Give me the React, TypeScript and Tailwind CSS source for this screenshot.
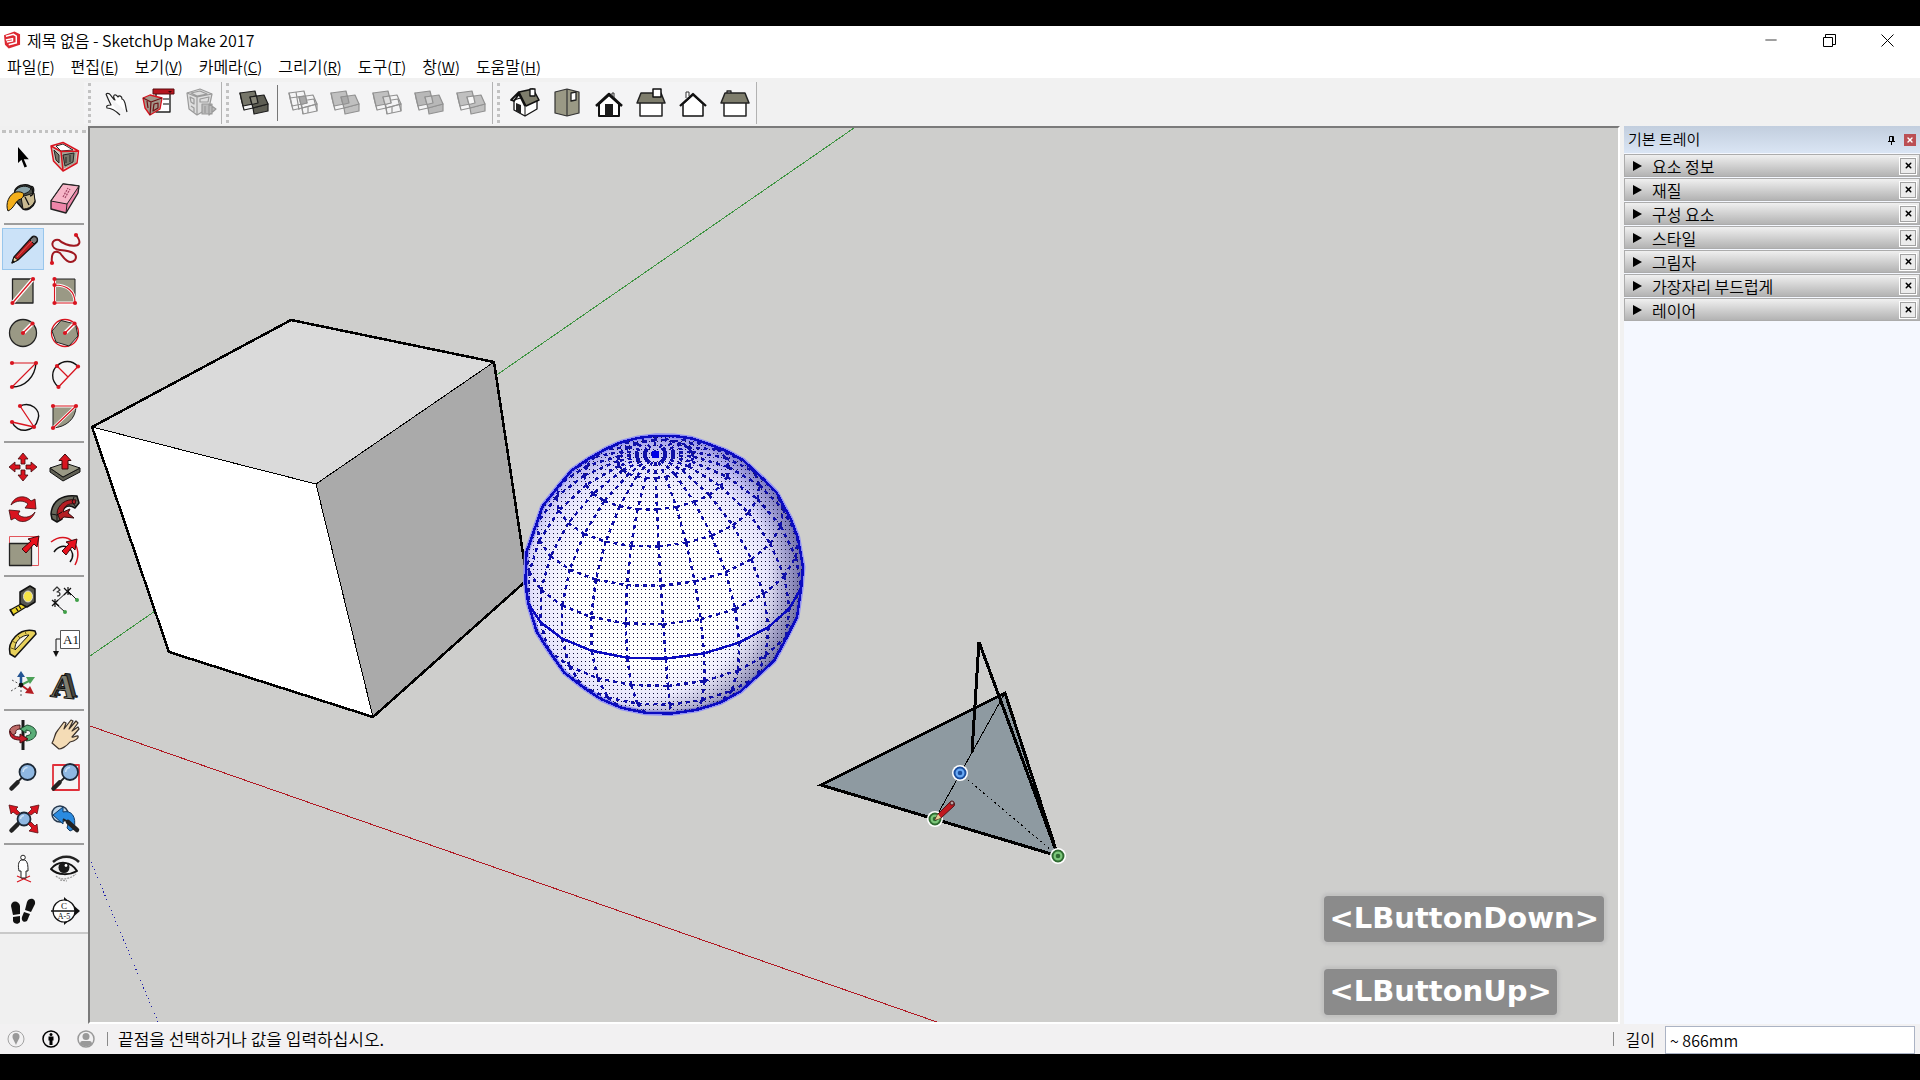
import type { ReactNode } from "react";
import { X, Minus } from "lucide-react";

const RED = "#d8141f";
const DARK = "#262626";
const STONE = "#9a9985";

type Tool = { label: string; icon: ReactNode };

function Icon({ children }: { children: ReactNode }) {
  return (
    <svg viewBox="0 0 34 34" className="h-[34px] w-[34px] overflow-visible" fill="none" strokeLinejoin="round" aria-hidden="true">
      {children}
    </svg>
  );
}

function Dots({ points }: { points: number[][] }) {
  return (
    <>
      {points.map(([x, y]) => (
        <circle key={`${x}-${y}`} cx={x} cy={y} r="2.1" fill={RED} />
      ))}
    </>
  );
}

function Lens({ x, y, r }: { x: number; y: number; r: number }) {
  return (
    <>
      <path d={`M${x - r * 0.7} ${y + r * 0.7}L5 29`} stroke="#222" strokeWidth="2" />
      <path d="M11.500 22.500L5.500 28.500" stroke="#222" strokeWidth="4.500" strokeLinecap="round" />
      <circle cx={x} cy={y} r={r} fill="#8fb8e2" stroke="#1c2836" strokeWidth="1.800" />
      <path d={`M${x - r * 0.55} ${y}A${r * 0.6} ${r * 0.6} 0 0 1 ${x} ${y - r * 0.55}`} stroke="#cfe2f5" strokeWidth="1.500" />
    </>
  );
}

/* ---- left tool palette ---- */

const paletteGroups: Tool[][] = [
  [
    {
      label: "선택",
      icon: <path d="M12 7V23L15.500 19.800L18.500 27.500L21 26.500L17.800 19.200H22.800Z" fill="#000" />,
    },
    {
      label: "구성 요소 만들기",
      icon: (
        <>
          <path d="M3 6L15 2.500L30.500 11L29 23L15 31L5.500 21Z" fill="#f4e6e4" />
          <path d="M13 12L29 11L28 23L15 29Z" fill="#a7a697" />
          <path d="M3 6L13 12L15 30.500L5.500 21Z" fill="#c9c6bb" />
          <path d="M8 6L15 4L25 10L13 11Z" fill="#fff" stroke={DARK} />
          <path d="M15 15L26 13L25 22L17 26ZM18 17V23M22 15V22M6 10L11 15V23L8 20Z" fill="#777669" stroke={DARK} />
          <path d="M3 6L15 2.500L30.500 11L29 23L15 31L5.500 21ZM3 6L13 11.500L30.500 11M13 11.500L15 31" stroke={RED} strokeWidth="1.500" />
        </>
      ),
    },
    {
      label: "페인트통",
      icon: (
        <>
          <path d="M9 8C12 2 23 1 26 6L29 20C27 26 21 29 17 27L8 17Z" fill="#4d5149" stroke="#111" strokeWidth="1.500" />
          <path d="M9 9C13 3 22 3 25 7C23 11 15 14 9 12Z" fill="#8aa3a8" stroke="#111" />
          <path d="M15 15L28 11L29 19C26 25 22 27 17 27Z" fill="#c9ba91" stroke="#111" />
          <path d="M19 15L23 23M24 5C29 2 29 13 24 14" stroke="#111" strokeWidth="1.300" />
          <path d="M2 29C-1 22 3 12 10 10C18 9 20 13 15 17C9 18 9 26 2 29Z" fill="#f4b01c" stroke="#111" />
        </>
      ),
    },
    {
      label: "지우개",
      icon: (
        <>
          <path d="M3 19L15 2L31 4L30 11L18 31L3 27Z" fill="#ee86a9" stroke="#222" strokeWidth="1.400" />
          <path d="M3 19L15 2L31 4L19 22Z" fill="#f7b5c8" stroke="#222" />
          <path d="M19 22L18 31" stroke="#222" />
          <path d="M15 15L20 6M17 16L22 7" stroke="#a04665" strokeWidth="1.200" strokeDasharray="2 1" />
        </>
      ),
    },
  ],
  [
    {
      label: "선",
      icon: (
        <>
          <path d="M6 31L8 25L26 5C28 3 33 5 31 10L12 28Z" fill="#b81d20" stroke="#161616" strokeWidth="1.300" />
          <path d="M6 31L8 25L12 28Z" fill="#e3cc9a" stroke="#161616" />
          <path d="M24 8L27 5C29 4 32 6 31 9L28 12Z" fill="#777" stroke="#161616" />
          <path d="M11 25L26 9" stroke="#e25a55" />
          <path d="M6 31L7 28L9 30Z" fill="#111" />
        </>
      ),
    },
    {
      label: "자유곡선",
      icon: (
        <>
          <path d="M28 3C40 18 17 15 11 8C3 6 1 17 12 18C26 19 30 23 27 28C21 34 15 25 12 21C5 17 3 23 4 31" stroke="#a01820" strokeWidth="2" />
          <Dots points={[[28, 3], [4, 31]]} />
        </>
      ),
    },
    {
      label: "직사각형",
      icon: (
        <>
          <path d="M6.500 5H27V29H6.500Z" fill={STONE} stroke="#222" strokeWidth="1.300" />
          <path d="M6.500 29L27 5" stroke="#fff" strokeWidth="4" />
          <path d="M6.500 29L27 5" stroke={RED} strokeWidth="1.300" />
          <Dots points={[[27, 5], [6.5, 29]]} />
        </>
      ),
    },
    {
      label: "회전된 직사각형",
      icon: (
        <>
          <path d="M6.500 5H27V29H6.500Z" fill={STONE} stroke="#222" />
          <path d="M6.500 5V29H27C27 17 19 11 6.500 11" stroke="#fff" strokeWidth="3" />
          <path d="M6.500 5V29H27C27 17 19 11 6.500 11" stroke={RED} strokeWidth="1.200" />
          <Dots points={[[6.5, 5], [6.5, 11], [6.5, 29], [27, 29]]} />
        </>
      ),
    },
    {
      label: "원",
      icon: (
        <>
          <circle cx="17" cy="17" r="13.500" fill={STONE} stroke="#222" strokeWidth="1.300" />
          <path d="M17 17L26.500 7.500" stroke="#fff" strokeWidth="4" />
          <path d="M17 17L26.500 7.500" stroke={RED} strokeWidth="1.300" />
          <Dots points={[[17, 17], [26.5, 7.5]]} />
        </>
      ),
    },
    {
      label: "다각형",
      icon: (
        <>
          <circle cx="17" cy="17" r="13.500" fill="#fff" stroke={RED} strokeWidth="1.300" />
          <path d="M13 4.500L27.500 8L30 20L21 30L8 26L4 15Z" fill={STONE} stroke="#222" />
          <path d="M17 17L26.500 7.500" stroke="#fff" strokeWidth="4" />
          <path d="M17 17L26.500 7.500" stroke={RED} strokeWidth="1.300" />
          <Dots points={[[17, 17], [26.5, 7.5]]} />
        </>
      ),
    },
    {
      label: "호",
      icon: (
        <>
          <path d="M30 5C29 19 19 29 6 29" stroke="#111" strokeWidth="1.400" />
          <path d="M6 5H30L6 29" stroke={RED} strokeWidth="1.100" />
          <Dots points={[[6, 5], [30, 5], [6, 29]]} />
        </>
      ),
    },
    {
      label: "2점 호",
      icon: (
        <>
          <path d="M10.500 29C2 22 4 12 9 8C15 2 24 2 30 8.500" stroke="#111" strokeWidth="1.400" />
          <path d="M10.500 29L30 8.500M9 8L20 19" stroke={RED} strokeWidth="1.300" />
          <Dots points={[[10.5, 29], [30, 8.5], [9, 8]]} />
        </>
      ),
    },
    {
      label: "3점 호",
      icon: (
        <>
          <path d="M14 6C25 1 35 10 32 19C29 33 11 34 6 22" stroke="#111" strokeWidth="1.400" />
          <path d="M14 6L28 27L6 22" stroke={RED} strokeWidth="1.300" />
          <Dots points={[[14, 6], [28, 27], [6, 22]]} />
        </>
      ),
    },
    {
      label: "파이",
      icon: (
        <>
          <path d="M5 6H28C28 19 18 27 5 28Z" fill={STONE} stroke="#222" />
          <path d="M5 28L28 6H5" stroke="#fff" strokeWidth="3" />
          <path d="M5 28L28 6H5" stroke={RED} strokeWidth="1.200" />
          <Dots points={[[5, 6], [28, 6], [5, 28]]} />
        </>
      ),
    },
  ],
  [
    {
      label: "이동",
      icon: (
        <g fill={RED} stroke="#3d0a0d" strokeWidth=".800">
          {[0, 90, 180, 270].map((a) => (
            <path key={a} transform={`rotate(${a} 17 17)`} d="M17 3L22 9H19V14H15V9H12Z" />
          ))}
        </g>
      ),
    },
    {
      label: "밀기/끌기",
      icon: (
        <>
          <path d="M2 18V22L15 31L32 22V18L15 27Z" fill="#5f5f53" stroke="#111" />
          <path d="M2 18L17 13L32 18L15 27Z" fill={STONE} stroke="#111" />
          <path d="M17 4L23 10.500H20V19H14V10.500H11Z" fill={RED} stroke="#3d0a0d" />
        </>
      ),
    },
    {
      label: "회전",
      icon: (
        <g fill={RED} stroke="#3d0a0d" strokeWidth=".800">
          <path d="M5 13C8 4 19 2 25 9L29 7L30 17L19 16L22 12C18 8 10 8 5 13Z" />
          <path d="M29 20C26 29 15 33 9 26L5 28L3 18L14 19L12 22C16 27 25 26 29 20Z" />
        </g>
      ),
    },
    {
      label: "따라가기",
      icon: (
        <>
          <path d="M3 22C4 9 14 2 29 4L31 11L27 16C19 11 13 16 14 27L9 30L4 27Z" fill="#66665a" stroke="#111" strokeWidth="1.500" />
          <path d="M9 22C9 13 18 6 28 8L27 12C20 11 16 14 15 20L22 17L20 21L26 26L16 25L12 28L10 23Z" fill="#b51d23" stroke="#350b0d" />
          <path d="M3 22L9 23V30M9 23L14 20M26 5L24 10L28 15" stroke="#111" />
        </>
      ),
    },
    {
      label: "배율",
      icon: (
        <>
          <path d="M3.500 2.500H32.500V31.500H3.500Z" stroke="#e2555c" />
          <path d="M3.500 9.500H25.500V31.500H3.500Z" fill={STONE} stroke="#222" strokeWidth="1.300" />
          <path d="M33 2L31 13L28 10L20 19L16 15L25 7L22 5Z" fill="#e8101c" stroke="#3d0a0d" />
        </>
      ),
    },
    {
      label: "오프셋",
      icon: (
        <>
          <path d="M3 8C19-5 37 12 27 31" stroke={RED} strokeWidth="1.500" />
          <path d="M6 18C15 5 31 17 22 28" stroke="#111" strokeWidth="1.500" />
          <path d="M29 5L27 16L24 13L18 21L14 17L21 10L18 8Z" fill="#e8101c" stroke="#3d0a0d" />
        </>
      ),
    },
  ],
  [
    {
      label: "줄자",
      icon: (
        <>
          <path d="M14 8L24 2L29 5V18L21 23L14 20Z" fill="#56564e" stroke="#111" strokeWidth="1.500" />
          <ellipse cx="22" cy="12.500" rx="4.500" ry="5.500" fill="#f6e445" stroke="#ddd" />
          <path d="M15 20L4 26L7 31L20 23Z" fill="#ead328" stroke="#111" strokeWidth="1.300" />
          <path d="M4 25L8 32M10 24L12 27M13 22L15 25" stroke="#111" strokeWidth="1.300" />
        </>
      ),
    },
    {
      label: "치수",
      icon: (
        <>
          <path d="M7 19L20 7L29 16M7 19L17 28" stroke="#111" />
          <path d="M4 16L11 22M4 22L10 16M7 15V23M16 4L23 11M16 11L23 4M20 3V11" stroke="#111" strokeWidth="1.200" />
          <path d="M5 7L9 3L12 6L9 8C13 8 13 12 9 12" stroke="#333" strokeWidth="1.200" />
          <circle cx="29" cy="16" r="2" fill="#3f9f47" />
          <circle cx="17" cy="28" r="2" fill="#3f9f47" />
        </>
      ),
    },
    {
      label: "각도기",
      icon: (
        <>
          <path d="M4 28C1 16 13 1 29 5L30 8L9 31Z" fill="#e8d15b" stroke="#111" strokeWidth="1.500" />
          <path d="M9 24C8 16 15 9 23 9Z" fill="#f7f3e6" stroke="#111" />
          <path d="M5 22L8 23M6 15L10 17M11 9L14 12M19 5L20 8" stroke="#705d15" />
        </>
      ),
    },
    {
      label: "텍스트",
      icon: (
        <>
          <path d="M12.500 4.500H31.500V22.500H12.500Z" fill="#fff" stroke="#555" />
          <text x="15" y="18" fontSize="13" fontFamily="Liberation Serif, serif" fill="#111">A1</text>
          <path d="M12 13H8V26" stroke="#111" />
          <path d="M5 25H11L8 31Z" fill="#111" />
        </>
      ),
    },
    {
      label: "축",
      icon: (
        <>
          <path d="M6 12L15 17M5 23L15 17M15 18V29" stroke="#555" strokeDasharray="2 2" />
          <path d="M15 17V7" stroke="#235493" strokeWidth="2.500" />
          <path d="M15 3L19 9H11Z" fill="#235493" />
          <path d="M15 17L23 13" stroke="#4ba057" strokeWidth="2" />
          <path d="M20 9L29 9L24 16Z" fill="#4ba057" />
          <path d="M15 17L22 22" stroke="#b51d23" strokeWidth="2" />
          <path d="M24 18L28 26L19 25Z" fill="#b51d23" />
          <circle cx="15" cy="17" r="2.300" fill="#111" />
        </>
      ),
    },
    {
      label: "3D 텍스트",
      icon: (
        <g fontFamily="Liberation Serif, serif" fontWeight="700" fontSize="34" stroke="#111" strokeWidth="1" transform="rotate(6 17 17)">
          <text x="6" y="28" fill="#474740">A</text>
          <text x="3" y="30" fill="#7d7d70">A</text>
        </g>
      ),
    },
  ],
  [
    {
      label: "궤도",
      icon: (
        <>
          <path d="M17 2V32" stroke="#1b1b1b" strokeWidth="3" />
          <path d="M14 7C4 7 1 13 6 18L10 15C9 13 11 11 14 11Z" fill="#bd6b68" stroke="#431416" />
          <path d="M20 23C33 22 34 9 21 7L14 11L20 15V12C27 13 26 17 20 18Z" fill="#5aae78" stroke="#17472a" />
          <path d="M4 13C3 19 7 22 14 22V25L22 21L14 16V19C9 19 6 17 4 13Z" fill="#c51d2a" stroke="#4b0d12" />
        </>
      ),
    },
    {
      label: "이동하기",
      icon: (
        <path
          d="M4 25C7 21 6 16 10 12L16 4L18 5L16 11L23 2L25 3L21 11L28 3L30 5L24 13L30 9L31 11L24 19C26 20 28 17 30 18C31 20 27 23 22 24C18 29 13 31 11 31Z"
          fill="#f4dcb6"
          stroke="#3a3029"
          strokeWidth="1.200"
        />
      ),
    },
    { label: "확대/축소", icon: <Lens x={21.5} y={12} r={8} /> },
    {
      label: "창 확대/축소",
      icon: (
        <>
          <path d="M5 5H31V30H5Z" stroke="#e0303a" strokeWidth="1.800" />
          <Lens x={22} y={12} r={8} />
        </>
      ),
    },
    {
      label: "범위 확대/축소",
      icon: (
        <>
          <Lens x={18} y={17} r={6.5} />
          <path d="M3 3L12 5L10 7L14 11L11 13L7 10L5 12ZM33 3L31 12L29 10L25 13L22 11L26 7L24 5ZM32 31L23 29L26 26L22 22L25 20L29 24L31 22Z" fill={RED} stroke="#5a1014" strokeWidth=".800" />
        </>
      ),
    },
    {
      label: "이전",
      icon: (
        <>
          <circle cx="12" cy="12" r="8" fill="#bdd4e8" stroke="#26384d" strokeWidth="1.500" />
          <path d="M5 13L15 5V10C23 8 29 14 26 27L22 29L19 26C21 20 19 18 15 18V22Z" fill="#2a8be0" stroke="#123b65" />
          <path d="M15 17L20 20" stroke="#222" strokeWidth="2" />
          <path d="M20 20L29 28" stroke="#222" strokeWidth="4.500" strokeLinecap="round" />
        </>
      ),
    },
  ],
  [
    {
      label: "카메라 배치",
      icon: (
        <>
          <path d="M11 24L25 30M24 24L11 30" stroke={RED} strokeWidth="1.200" />
          <path d="M15 8C12 10 12 14 13 19H15V26H20V19H22C22 14 22 10 19 8Z" fill="#fff" stroke="#222" />
          <circle cx="17" cy="5.500" r="2.300" fill="#fff" stroke="#222" />
        </>
      ),
    },
    {
      label: "둘러보기",
      icon: (
        <>
          <path d="M5 10C13 3 24 3 31 10" stroke="#222" strokeWidth="2.500" />
          <path d="M3 17C10 8 23 9 29 19C22 23 10 24 3 17Z" fill="#eee" stroke="#111" strokeWidth="2" />
          <circle cx="16" cy="15.500" r="5.500" fill="#181818" />
          <circle cx="18" cy="13.500" r="1.400" fill="#fff" />
          <path d="M8 24C13 29 22 27 28 22M12 28L19 29" stroke="#999" strokeWidth="1.200" strokeDasharray="2 1" />
        </>
      ),
    },
    {
      label: "걷기",
      icon: (
        <>
          <path d="M5 12C5 6 13 6 14 12L14 20L7 21Z" fill="#111" />
          <path d="M7 23L14 22V28C12 31 8 30 7 27Z" fill="#111" />
          <path d="M21 8C23 3 30 4 29 10L25 18L19 16Z" fill="#111" />
          <path d="M18 18L24 20L21 27C18 29 15 27 16 23Z" fill="#111" />
        </>
      ),
    },
    {
      label: "단면",
      icon: (
        <>
          <path d="M16 3L32 17L16 31Z" fill="#111" />
          <circle cx="16" cy="17" r="11" fill="#fff" stroke="#111" strokeWidth="1.200" />
          <path d="M3 17H31" stroke="#111" strokeWidth="1.500" />
          <g fontFamily="Liberation Serif, serif" fill="#111" textAnchor="middle">
            <text x="16" y="15" fontSize="9">C</text>
            <text x="16" y="25" fontSize="8">A-5</text>
          </g>
        </>
      ),
    },
  ],
];

/* ---- top toolbar ---- */

const BACK_TOP = "M3 7L18 5L21 17L6 20Z";
const BACK_SIDE = "M3 7L6 20L7 24L4 12Z";
const FRONT_TOP = "M13 11L27 9L31 18L16 22Z";
const FRONT_SIDE = "M16 22L31 18V25L17 28Z";
const OVERLAP = "M13 11L19.500 10L21 17L15 18.500Z";

function SolidIcon({ back, front, overlap, stroke }: { back: string; front: string; overlap: string; stroke: string }) {
  return (
    <Icon>
      <g stroke={stroke} strokeWidth="1.200">
        <path d={BACK_SIDE} fill={back} />
        <path d={BACK_TOP} fill={back} />
        <path d="M7 24L16 22" />
        <path d={FRONT_SIDE} fill={front} />
        <path d={FRONT_TOP} fill={front} />
        {back === "none" && <path d="M4 12L18 10M10 6L13 24" />}
        {front === "none" && <path d="M17 28L15 15L28 13L31 25M22 20V27" />}
        <path d={OVERLAP} fill={overlap} />
      </g>
    </Icon>
  );
}

const warehouseTools: Tool[] = [
  {
    label: "상호 작용",
    icon: (
      <path d="M7 8C11 5 13 13 16 14C13 9 16 7 19 11C20 9 23 10 23 13C27 14 26 20 28 26M7 8C9 13 11 17 12 19C8 19 7 20 8 22C13 22 16 24 21 29" fill="#fff" stroke="#222" strokeWidth="1.200" />
    ),
  },
  {
    label: "구성 요소 옵션",
    icon: (
      <>
        <path d="M15 6H29V26H15Z" fill="#fff" stroke="#222" strokeWidth="1.400" />
        <path d="M12 3H33V8H12Z" fill="#b5141d" stroke="#5b0c10" />
        <path d="M27 5H31L29 7Z" fill="#3b0709" />
        <path d="M22 13H28M22 18H28" stroke="#555" strokeWidth="1.300" />
        <path d="M2 12L9 9L21 12L19 23L9 29L4 22Z" fill="#a29689" stroke={RED} strokeWidth="1.300" />
        <path d="M2 12L10 16L21 12M10 16L9 29M13 18L17 17V22L12 25ZM6 15L7 22" stroke="#6d1115" strokeWidth="1.200" />
      </>
    ),
  },
  {
    label: "구성 요소 속성",
    icon: (
      <g stroke="#9a9a9a" strokeWidth="1.200">
        <path d="M4 7L17 3L29 8L26 22L14 29L6 23Z" fill="#dedede" />
        <path d="M4 7L14 11L29 8M14 11V29M8 7L17 5L24 8L14 10ZM17 13L26 11L25 16H17ZM7 11L11 13V18L8 16ZM8 20L11 22V26" />
        <path d="M19 18H29V28H19ZM22 20V27M26 18L33 23L26 29Z" fill="#bbb" />
      </g>
    ),
  },
];

const houseTools: Tool[] = [
  {
    label: "등각",
    icon: (
      <>
        <path d="M6 14V24L17 30L29 23V12L22 9Z" fill="#fff" stroke="#111" strokeWidth="1.300" />
        <path d="M8 17L13 19V28L8 25Z" fill="#222" />
        <path d="M17 19V30" stroke="#111" />
        <path d="M11 6L25 3L31 14L18 20Z" fill="#7e7d6c" stroke="#111" strokeWidth="1.500" />
        <path d="M11 6L3 14L6 15L11 8L17 20" stroke="#111" strokeWidth="1.800" />
        <path d="M22 3H27V10H22Z" fill="#fff" stroke="#111" strokeWidth="1.300" />
      </>
    ),
  },
  {
    label: "위쪽",
    icon: (
      <>
        <path d="M5 6L17 3L29 6V27L17 30L5 27Z" fill={STONE} stroke="#333" strokeWidth="1.200" />
        <path d="M17 3V30" stroke="#333" strokeWidth="1.200" />
        <path d="M21 7L26 6V14L21 15Z" fill="#fff" stroke="#222" strokeWidth="1.300" />
      </>
    ),
  },
  {
    label: "앞쪽",
    icon: (
      <>
        <path d="M7 18V30H27V18L17 9Z" fill="#fff" stroke="#111" strokeWidth="2" />
        <path d="M13 18H21V30H13Z" fill="#1b1b1b" />
        <path d="M4 20L17 8L30 20" stroke="#111" strokeWidth="2.500" />
        <path d="M20 10V7H22V12" stroke="#333" />
      </>
    ),
  },
  {
    label: "오른쪽",
    icon: (
      <>
        <path d="M6 16H28V30H6Z" fill="#fff" stroke="#222" strokeWidth="1.500" />
        <path d="M7 7H27L31 17H3Z" fill="#7e7d6c" stroke="#222" strokeWidth="1.500" />
        <path d="M19 3H27V11H19Z" fill="#fff" stroke="#111" strokeWidth="1.500" />
      </>
    ),
  },
  {
    label: "뒤쪽",
    icon: (
      <>
        <path d="M10 12V6H13V10" fill="#fff" stroke="#333" />
        <path d="M7 18V30H27V18L17 9Z" fill="#fff" stroke="#111" strokeWidth="1.500" />
        <path d="M4 20L17 8L30 20" stroke="#111" strokeWidth="2.300" />
      </>
    ),
  },
  {
    label: "왼쪽",
    icon: (
      <>
        <path d="M6 16H28V30H6Z" fill="#fff" stroke="#222" strokeWidth="1.500" />
        <path d="M7 7H27L31 17H3Z" fill="#7e7d6c" stroke="#222" strokeWidth="1.500" />
        <path d="M9 7V5H13V7" stroke="#222" strokeWidth="1.300" />
      </>
    ),
  },
];

const solidTools = [
  { label: "교차", back: "none", front: "none", overlap: "#a8a8a8" },
  { label: "결합", back: "#c0c0c0", front: "#c0c0c0", overlap: "#aaaaaa" },
  { label: "빼기", back: "#c0c0c0", front: "none", overlap: "#dddddd" },
  { label: "트림", back: "#b8b8b8", front: "#b8b8b8", overlap: "#d0d0d0" },
  { label: "분할", back: "#c0c0c0", front: "#c0c0c0", overlap: "#f6f6f6" },
];

function ToolButton({ label, children }: { label: string; children: ReactNode }) {
  return (
    <button type="button" aria-label={label} className="flex h-10 w-[42px] items-center justify-center">
      {children}
    </button>
  );
}

function ToolbarGroup({ children }: { children: ReactNode }) {
  return (
    <div className="flex items-center border-r border-[#b2b2b2] bg-[#f4f4f5] pl-1">
      <span className="mr-1 h-10 border-l-3 border-dotted border-[#c2c2c2]" />
      {children}
    </div>
  );
}

function Toolbar() {
  return (
    <div className="flex h-12 shrink-0 items-stretch bg-[#f1f1f1] pt-1 pb-0.5 pl-[84px]">
      <ToolbarGroup>
        {warehouseTools.map((t) => (
          <ToolButton key={t.label} label={t.label}>
            <Icon>{t.icon}</Icon>
          </ToolButton>
        ))}
      </ToolbarGroup>
      <ToolbarGroup>
        <ToolButton label="외부 셸">
          <SolidIcon back="#76766a" front="#5e5e54" overlap="#88877a" stroke="#1d1d1d" />
        </ToolButton>
        <span className="mr-1 ml-0.5 h-9 w-px bg-[#777]" />
        {solidTools.map((s) => (
          <ToolButton key={s.label} label={s.label}>
            <SolidIcon back={s.back} front={s.front} overlap={s.overlap} stroke="#919191" />
          </ToolButton>
        ))}
      </ToolbarGroup>
      <ToolbarGroup>
        {houseTools.map((t) => (
          <ToolButton key={t.label} label={t.label}>
            <Icon>{t.icon}</Icon>
          </ToolButton>
        ))}
      </ToolbarGroup>
    </div>
  );
}

function Palette() {
  return (
    <aside className="w-[88px] shrink-0 bg-[#f0f0f0] pt-1">
      <div className="border-b-2 border-[#c9c9c9] bg-[#f4f4f5] pr-0.5 pl-0.5">
        <div className="mb-[3px] border-t-3 border-dotted border-[#c2c2c2]" />
        {paletteGroups.map((group, i) => (
          <div key={i}>
            {i > 0 && <hr className="my-[3px] mr-0.5 ml-0.5 border-t-2 border-[#9d9d9d]" />}
            <div className="grid grid-cols-2">
              {group.map((t) => (
                <button
                  key={t.label}
                  type="button"
                  aria-label={t.label}
                  className={`flex h-[42px] items-center justify-center border ${
                    t.label === "선" ? "border-[#98c6ec] bg-[#cbe2f8]" : "border-transparent"
                  }`}
                >
                  <Icon>{t.icon}</Icon>
                </button>
              ))}
            </div>
          </div>
        ))}
      </div>
    </aside>
  );
}

/* ---- model view ---- */

const SPHERE = { x: 664, y: 575, r: 139.5, distance: 12, pitch: 34, roll: 4.2, spin: -1.7 };
const rad = (deg: number) => (deg * Math.PI) / 180;

function project(lat: number, lon: number) {
  const { x, y, r, distance, pitch, roll, spin } = SPHERE;
  const a = rad(lon + spin);
  const px = Math.cos(rad(lat)) * Math.sin(a);
  const pf = Math.cos(rad(lat)) * Math.cos(a);
  const pz = Math.sin(rad(lat));
  const up = pz * Math.cos(rad(pitch)) - pf * Math.sin(rad(pitch));
  const depth = pz * Math.sin(rad(pitch)) + pf * Math.cos(rad(pitch));
  const k = (r * Math.sqrt(distance * distance - 1)) / (distance - depth);
  const c = Math.cos(rad(roll));
  const s = Math.sin(rad(roll));
  return {
    x: x + k * (px * c - up * s),
    y: y - k * (px * s + up * c),
    visible: depth * distance > 0.4,
  };
}

const lats = [75, 60, 45, 30, 15, 0, -15, -30, -45, -60];
const lons = Array.from({ length: 24 }, (_, i) => i * 15);

function segment(a: ReturnType<typeof project>, b: ReturnType<typeof project>) {
  return a.visible && b.visible ? `M${a.x.toFixed(1)} ${a.y.toFixed(1)}L${b.x.toFixed(1)} ${b.y.toFixed(1)}` : "";
}

const ringPath = (lat: number) => lons.map((lon) => segment(project(lat, lon), project(lat, lon + 15))).join("");
const meridians = lons
  .flatMap((lon) => [90, ...lats].slice(0, -1).map((lat) => segment(project(lat, lon), project(lat - 15, lon))))
  .join("");

// silhouette: the outermost mesh vertex in each direction
const vertices = lats.flatMap((lat) => lons.map((lon) => project(lat, lon)));
const outline = Array.from({ length: 120 }, (_, i) => {
  const c = Math.cos(rad(i * 3));
  const s = Math.sin(rad(i * 3));
  const v = vertices.reduce((best, p) => (p.x * c + p.y * s > best.x * c + best.y * s ? p : best));
  return `${v.x.toFixed(1)},${v.y.toFixed(1)}`;
}).join(" ");

function Sphere() {
  return (
    <g>
      <polygon points={outline} fill="url(#ball)" stroke="#8f8ff5" strokeWidth="5" />
      <polygon points={outline} fill="url(#shade)" />
      <polygon points={outline} fill="url(#halftone)" />
      <g fill="none" stroke="#1010a8" strokeWidth="2.500" shapeRendering="crispEdges">
        <path d={lats.filter((l) => l !== 0).map(ringPath).join("")} strokeDasharray="4 4" />
        <path d={meridians} strokeDasharray="4 4" />
        <path d={ringPath(0)} stroke="#0c0cc0" />
        <polygon points={outline} stroke="#0c0cc0" />
      </g>
      <rect x="652" y="451" width="7" height="7" fill="#0000e6" />
    </g>
  );
}

function SnapPoint({ x, y, ring, fill }: { x: number; y: number; ring: string; fill: string }) {
  return (
    <g>
      <circle cx={x} cy={y} r="8" fill="#fff" />
      <circle cx={x} cy={y} r="5.500" fill={fill} stroke={ring} strokeWidth="2" />
      <circle cx={x} cy={y} r="2.300" fill={ring} />
    </g>
  );
}

function Scene() {
  return (
    <svg viewBox="90 128 1528 894" preserveAspectRatio="xMinYMin slice" className="h-full w-full" role="img" aria-label="모델 보기">
      <defs>
        <radialGradient id="ball" cx="0.46" cy="0.54" r="0.57">
          <stop offset="0.5" stopColor="#ffffff" />
          <stop offset="0.76" stopColor="#e4e2fb" />
          <stop offset="1" stopColor="#8a87e4" />
        </radialGradient>
        <radialGradient id="shade" cx="0.38" cy="0.46" r="0.66">
          <stop offset="0.74" stopColor="#404058" stopOpacity="0" />
          <stop offset="1" stopColor="#404058" stopOpacity="0.6" />
        </radialGradient>
        <pattern id="halftone" width="4" height="4" patternUnits="userSpaceOnUse">
          <rect x="1" y="1" width="1" height="1" fill="#10103c" />
        </pattern>
      </defs>

      <g fill="none" shapeRendering="crispEdges">
        <path d="M90 656L854 128" stroke="#3d9440" />
        <path d="M90 726L937 1022" stroke="#b01822" />
        <path d="M91 862L158 1022" stroke="#1c1ca8" strokeDasharray="1 3" />

        <path d="M92 427L291 320L494 362L316 484Z" fill="#dadada" />
        <path d="M92 427L316 484L373 717L169 652Z" fill="#fff" />
        <path d="M316 484L494 362L527 580L373 717Z" fill="#aaaaaa" />
        <path d="M92 427L316 484L494 362M316 484L373 717" stroke="#000" />
        <path d="M92 427L291 320L494 362L527 580L373 717L169 652Z" stroke="#000" strokeWidth="2.500" />
      </g>

      <Sphere />

      <g fill="none" shapeRendering="crispEdges" stroke="#000">
        <path d="M821 785L1005 693L1058 856Z" fill="#8e9aa1" strokeWidth="3" />
        <path d="M1005 693L935 819" />
        <path d="M960 773L1058 856" strokeDasharray="2 3" />
        <path d="M972 752L979 642L1058 856" strokeWidth="3" />
      </g>

      <SnapPoint x={960} y={773} ring="#1b4f9f" fill="#69aaf5" />
      <SnapPoint x={935} y={819} ring="#2f6b31" fill="#7cc77a" />
      <SnapPoint x={1058} y={856} ring="#2f6b31" fill="#7cc77a" />
      <path d="M935 820L938 814L950 802C952 800 956 803 954 806L941 818Z" fill="#c0191f" stroke="#4f1518" />
      <path d="M935 820L938 814L941 818Z" fill="#e4cf96" />
      <circle cx="952" cy="803" r="2" fill="#b9a5a5" stroke="#4f1518" />
    </svg>
  );
}

function KeyCaption({ text }: { text: string }) {
  return (
    <kbd className="rounded bg-[#8b8b8b] px-[5px] pt-[3px] pb-[5px] font-['DejaVu_Sans',sans-serif] text-[29px] leading-[38px] font-bold text-white shadow-[0_0_3px_3px_#c1c1c0]">
      {text}
    </kbd>
  );
}

/* ---- right tray ---- */

const trayPanels = ["요소 정보", "재질", "구성 요소", "스타일", "그림자", "가장자리 부드럽게", "레이어"];

function Tray() {
  return (
    <aside className="flex w-[296px] shrink-0 flex-col bg-[#f5f8ff]">
      <header className="flex h-[27px] items-center bg-linear-to-b from-[#c2cede] to-[#dae5f4] pr-1 pl-1 text-[15px]">
        <h2 className="flex-1">기본 트레이</h2>
        <button type="button" aria-label="고정" className="mr-2">
          <svg viewBox="0 0 9 10" className="h-[10px] w-[9px]" fill="none" stroke="#000" aria-hidden="true">
            <path d="M2.500 6V1.500H6.500V6M1 6.500H8M4.500 7V10M5.500 1V6" />
          </svg>
        </button>
        <button type="button" aria-label="트레이 닫기" className="flex size-3 items-center justify-center bg-[#bb4f54] text-white">
          <X size={8} strokeWidth={4} />
        </button>
      </header>
      <ul className="mt-px flex flex-col gap-px">
        {trayPanels.map((name) => (
          <li
            key={name}
            className="flex h-[23px] items-center border border-[#acacac] bg-linear-to-b from-[#f0f0f0] to-[#b3b3b3] pr-[3px] pl-2"
          >
            <button type="button" aria-expanded="false" className="flex flex-1 items-center gap-2.5 text-left text-[16px] leading-5">
              <svg viewBox="0 0 9 10" className="h-[10px] w-[9px]" aria-hidden="true">
                <path d="M0 0L9 5L0 10Z" />
              </svg>
              {name}
            </button>
            <button
              type="button"
              aria-label={`${name} 닫기`}
              className="flex size-4 items-center justify-center border border-[#a2a2a2] bg-[#ececec] outline outline-white"
            >
              <X size={9} strokeWidth={4} />
            </button>
          </li>
        ))}
      </ul>
    </aside>
  );
}

const menus = [
  ["파일", "F"],
  ["편집", "E"],
  ["보기", "V"],
  ["카메라", "C"],
  ["그리기", "R"],
  ["도구", "T"],
  ["창", "W"],
  ["도움말", "H"],
];

function TitleBar() {
  return (
    <header className="flex h-7 shrink-0 items-center bg-white pl-1">
      <svg viewBox="0 0 18 20" className="mr-1.5 h-5 w-[17px]" aria-hidden="true">
        <path d="M0 5L11 1L17 4V15L5 19L1 15Z" fill="#dd2831" />
        <path d="M2 6L10 4L13 6V13L5 15M2 10L9 8.500V11L3 12" fill="none" stroke="#fff" strokeWidth="1.600" />
      </svg>
      <h1 className="flex-1 text-[16px] leading-6">제목 없음 - SketchUp Make 2017</h1>
      <button type="button" aria-label="최소화" className="flex h-7 w-[58px] items-center justify-center">
        <Minus size={18} strokeWidth={1} />
      </button>
      <button type="button" aria-label="이전 크기로" className="flex h-7 w-[58px] items-center justify-center">
        <svg viewBox="0 0 13 13" className="size-[13px]" fill="none" stroke="#000" aria-hidden="true">
          <path d="M.5 3.500H9.500V12.500H.5ZM2.500 3V.5H12.500V10.500H10" />
        </svg>
      </button>
      <button type="button" aria-label="닫기" className="mr-1 flex h-7 w-[58px] items-center justify-center">
        <svg viewBox="0 0 13 13" className="size-[13px]" stroke="#000" aria-hidden="true">
          <path d="M.5 .5L12.500 12.500M12.500 .5L.5 12.500" />
        </svg>
      </button>
    </header>
  );
}

function StatusBar() {
  return (
    <footer className="flex h-[30px] shrink-0 items-center overflow-hidden bg-[#f2f1f2] pl-[7px]">
      <svg viewBox="0 0 18 18" className="mr-[17px] size-[18px]" fill="none" aria-hidden="true">
        <circle cx="9" cy="9" r="8" stroke="#a3a3a3" />
        <path d="M9 15C7 10 5.500 9 5.500 6.500A3.500 3.500 0 0 1 12.500 6.500C12.500 9 11 10 9 15Z" fill="#999" />
      </svg>
      <svg viewBox="0 0 18 18" className="mr-[17px] size-[18px]" fill="none" aria-hidden="true">
        <circle cx="9" cy="9" r="8" stroke="#000" strokeWidth="1.500" />
        <circle cx="9" cy="4.500" r="1.500" fill="#000" />
        <path d="M6.500 6.500H11.500V10.500H10.500V15H7.500V10.500H6.500Z" fill="#000" />
      </svg>
      <svg viewBox="0 0 18 18" className="size-[18px]" fill="none" aria-hidden="true">
        <circle cx="9" cy="9" r="8" stroke="#999" strokeWidth="1.500" />
        <circle cx="9" cy="6.500" r="3.500" fill="#999" />
        <path d="M3 14C3 10.500 5 11 9 11S15 10.500 15 14C12 17 6 17 3 14Z" fill="#999" />
      </svg>
      <span className="mr-2.5 ml-3 h-3.5 w-px bg-[#8a8a8a]" />
      <p className="flex-1 text-[17px] leading-6">끝점을 선택하거나 값을 입력하십시오.</p>
      <span className="mr-3 h-3.5 w-px bg-[#8a8a8a]" />
      <label htmlFor="length" className="mr-2.5 text-[16px] leading-6">
        길이
      </label>
      <input
        id="length"
        defaultValue="~ 866mm"
        className="mt-0.5 mr-[5px] h-7 w-[250px] self-start border border-[#abb3c4] bg-white px-1 text-[16px] outline-none"
      />
    </footer>
  );
}

export default function App() {
  return (
    <div className="flex h-screen flex-col bg-black py-[26px] font-['Noto_Sans_CJK_KR',sans-serif] font-[350] text-black">
      <TitleBar />
      <nav className="flex h-6 shrink-0 items-center gap-4 bg-white pl-[7px] text-[16px] leading-6">
        {menus.map(([name, key]) => (
          <button key={name} type="button">
            {name}
            <span className="text-[15px]">
              (<u>{key}</u>)
            </span>
          </button>
        ))}
      </nav>
      <Toolbar />
      <div className="flex min-h-0 flex-1 bg-[#f1f1f1]">
        <Palette />
        <main className="relative mr-1 min-w-0 flex-1 border-2 border-t-[#7a7a7a] border-r-white border-b-white border-l-[#7a7a7a] bg-[#cececc]">
          <Scene />
          <div className="absolute right-3.5 bottom-[7px] flex flex-col items-start gap-[27px]">
            <KeyCaption text="<LButtonDown>" />
            <KeyCaption text="<LButtonUp>" />
          </div>
        </main>
        <Tray />
      </div>
      <StatusBar />
    </div>
  );
}
